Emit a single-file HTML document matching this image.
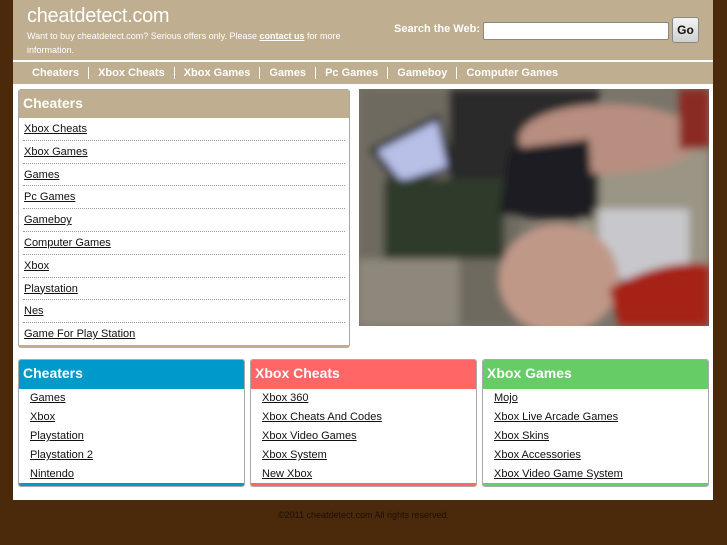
<!DOCTYPE html>
<html><head><meta charset="utf-8"><style>
*{margin:0;padding:0;box-sizing:border-box}
body{width:727px;height:545px;background:#4a2a0b;font-family:"Liberation Sans",sans-serif;position:relative;overflow:hidden}
#wrap{position:absolute;left:13px;top:0;width:700px;height:500px;background:#fff}
#hdr{position:absolute;left:0;top:0;width:700px;height:60px;background:#bfae8f}
#hdr h1{position:absolute;left:14px;top:5px;font-size:20px;color:#fff;font-weight:normal;letter-spacing:-0.3px}
#hdr p{position:absolute;left:14px;top:30px;width:340px;font-size:9px;line-height:13.5px;color:#fff}
#hdr p a{color:#fff;text-decoration:underline;font-weight:bold}
#srch{position:absolute;left:381px;top:23px;font-size:11px;font-weight:bold;color:#fff}
#inp{position:absolute;left:470px;top:22px;width:186px;height:18px;background:#fff;border:1px solid #888;border-radius:2px}
#go{position:absolute;left:659px;top:17px;width:27px;height:26px;background:linear-gradient(#f4f4f4,#d0d0d0);border:1px solid #888;border-radius:3px;font-size:12px;font-weight:bold;text-align:center;line-height:24px;color:#111}
#nav{position:absolute;left:0;top:62px;width:700px;height:22px;background:#bfae8f;font-size:11px;font-weight:bold;color:#fff;padding-left:10px;line-height:22px}
#nav span{padding:0 9px;border-left:1px solid #fff}
#nav span:first-child{border-left:none}
#lb{position:absolute;left:5px;top:89px;width:332px;height:259px;border:1px solid #aaa;border-radius:3px;border-bottom:3px solid #bfae8f;overflow:hidden}
#lb .h{height:28px;background:#bfae8f;color:#fff;font-weight:bold;font-size:14px;padding:5px 4px}
#lb a{display:block;height:22.8px;border-bottom:1px dotted #999;margin:0 4px 0 4px;padding-left:1px;font-size:11px;color:#111;line-height:22px}
#photo{position:absolute;left:346px;top:89px;width:350px;height:237px}
.bx{position:absolute;top:359px;width:227px;height:128px;border:1px solid #aaa;border-radius:3px;overflow:hidden;background:#fff}
.bx .h{height:29px;color:#fff;font-weight:bold;font-size:14px;padding:5px 4px}
.bx a{display:block;font-size:11px;color:#111;padding-left:11px;height:19px;line-height:19px}
.bx .f{position:absolute;left:0;bottom:0;width:100%;height:3px}
#ft{position:absolute;left:0;top:510px;width:727px;text-align:center;font-size:9px;color:#1e0f02}
a{text-decoration:underline}
</style></head><body>
<div id="wrap">
<div id="hdr"><h1>cheatdetect.com</h1>
<p>Want to buy cheatdetect.com? Serious offers only. Please <a>contact us</a> for more information.</p>
<div id="srch">Search the Web:</div><div id="inp"></div><div id="go">Go</div></div>
<div id="nav"><span>Cheaters</span><span>Xbox Cheats</span><span>Xbox Games</span><span>Games</span><span>Pc Games</span><span>Gameboy</span><span>Computer Games</span></div>
<div id="lb"><div class="h">Cheaters</div>
<a>Xbox Cheats</a><a>Xbox Games</a><a>Games</a><a>Pc Games</a><a>Gameboy</a><a>Computer Games</a><a>Xbox</a><a>Playstation</a><a>Nes</a><a>Game For Play Station</a></div>
<svg id="photo" viewBox="0 0 350 237"><defs><filter id="b"><feGaussianBlur stdDeviation="4"/></filter></defs>
<rect width="350" height="237" fill="#7a756a"/>
<g filter="url(#b)">
<rect x="0" y="0" width="160" height="237" fill="#6e6a60"/>
<rect x="220" y="60" width="130" height="120" fill="#9a9585"/>
<rect x="90" y="0" width="150" height="120" fill="#2a2a2c"/>
<polygon points="10,60 80,25 95,80 40,100" fill="#1a1c22"/>
<polygon points="18,62 78,32 88,78 42,92" fill="#b8c0e8"/>
<rect x="25" y="90" width="120" height="80" fill="#2f3a2a"/>
<rect x="0" y="170" width="100" height="67" fill="#8e887c"/>
<rect x="240" y="120" width="90" height="70" fill="#c8c8cc"/>
<ellipse cx="250" cy="50" rx="90" ry="35" fill="#b88e80"/>
<ellipse cx="200" cy="190" rx="60" ry="55" fill="#c09888"/>
<path d="M150,60 L230,50 L235,130 L180,130 L140,125 Z" fill="#1e1e22"/>
<path d="M250,200 Q300,170 350,175 L350,237 L260,237 Z" fill="#a62418"/>
<rect x="320" y="0" width="30" height="60" fill="#8a2a20"/>
</g></svg>
<div class="bx" style="left:5px"><div class="h" style="background:#0099cc">Cheaters</div><a>Games</a><a>Xbox</a><a>Playstation</a><a>Playstation 2</a><a>Nintendo</a><div class="f" style="background:#0099cc"></div></div>
<div class="bx" style="left:237px"><div class="h" style="background:#ff6666">Xbox Cheats</div><a>Xbox 360</a><a>Xbox Cheats And Codes</a><a>Xbox Video Games</a><a>Xbox System</a><a>New Xbox</a><div class="f" style="background:#ff6666"></div></div>
<div class="bx" style="left:469px"><div class="h" style="background:#66cc66">Xbox Games</div><a>Mojo</a><a>Xbox Live Arcade Games</a><a>Xbox Skins</a><a>Xbox Accessories</a><a>Xbox Video Game System</a><div class="f" style="background:#66cc66"></div></div>
</div>
<div id="ft">©2011 cheatdetect.com All rights reserved.</div>
</body></html>
